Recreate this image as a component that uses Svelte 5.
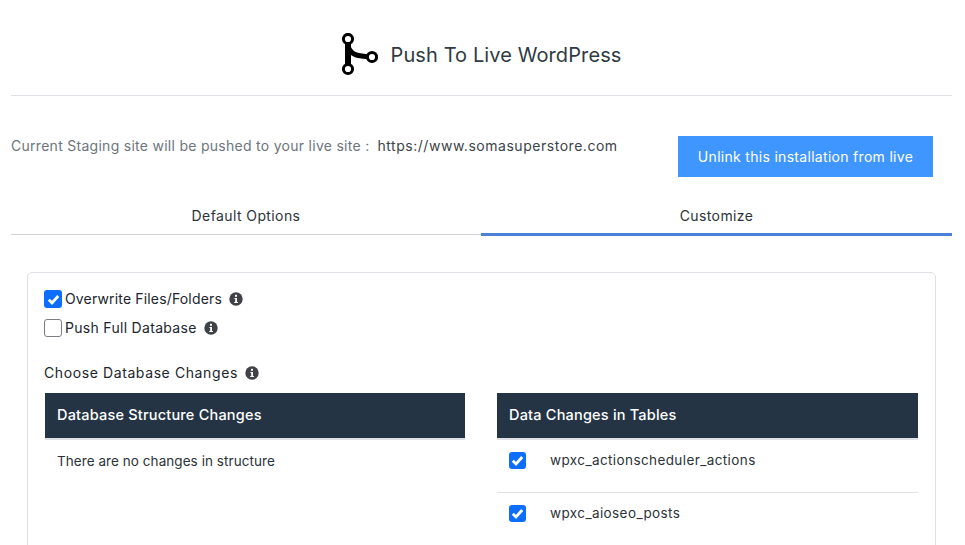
<script>
  const tables = ["wpxc_actionscheduler_actions", "wpxc_aioseo_posts"];
</script>

<main>
  <header class="head">
    <svg class="logo" width="38" height="44" viewBox="0 0 38 44" aria-hidden="true">
      <path d="M8 6V36" fill="none" stroke="#000" stroke-width="6" />
      <path d="M8 13C11 24 21 23 32 24" fill="none" stroke="#000" stroke-width="5" />
      <circle cx="8" cy="6" r="4.6" fill="#fff" stroke="#000" stroke-width="3" />
      <circle cx="32" cy="24" r="4.6" fill="#fff" stroke="#000" stroke-width="3" />
      <circle cx="8" cy="36" r="4.6" fill="#fff" stroke="#000" stroke-width="3" />
    </svg>
    <h1>Push To Live WordPress</h1>
  </header>

  <div class="site-row">
    <p class="site">
      <span class="muted">Current Staging site will be pushed to your live site :</span>
      <span class="url">https://www.somasuperstore.com</span>
    </p>
    <button class="unlink">Unlink this installation from live</button>
  </div>

  <nav class="tabs">
    <div class="tab">Default Options</div>
    <div class="tab active">Customize</div>
  </nav>

  <section class="panel">
    <label class="check">
      <span class="box on">{@render tick()}</span>
      <span class="label wide-a">Overwrite Files/Folders</span>
      {@render info()}
    </label>
    <label class="check second">
      <span class="box"></span>
      <span class="label wide-b">Push Full Database</span>
      {@render info()}
    </label>
    <div class="choose"><span class="label">Choose Database Changes</span> {@render info()}</div>

    <div class="columns">
      <div>
        <div class="col-head">Database Structure Changes</div>
        <div class="none">There are no changes in structure</div>
      </div>
      <div>
        <div class="col-head">Data Changes in Tables</div>
        {#each tables as name}
          <div class="table-row">
            <span class="box on small">{@render tick()}</span>
            <span>{name}</span>
          </div>
        {/each}
      </div>
    </div>
  </section>
</main>

{#snippet tick()}
  <svg width="17" height="17" viewBox="0 0 17 17" aria-hidden="true">
    <path d="M3.8 8.8L7 12L13.2 5" fill="none" stroke="#fff" stroke-width="2.8" />
  </svg>
{/snippet}

{#snippet info()}
  <svg class="info" width="14" height="14" viewBox="0 0 14 14" aria-hidden="true">
    <circle cx="7" cy="7" r="6.7" fill="#3f4347" />
    <rect x="6" y="2.8" width="2" height="2" fill="#fff" />
    <path d="M5.4 6H8V10H9V11H5.2V10H6.2V7H5.4Z" fill="#fff" />
  </svg>
{/snippet}

<style>
  :global(body) {
    background: #fff;
    overflow: hidden;
  }
  main {
    height: 545px;
    overflow: hidden;
    padding: 0 13px 0 11px;
    font-family: Inter, "Open Sans", sans-serif;
    font-size: 14px;
    color: #2c3338;
  }
  .head {
    height: 81px;
    padding: 14px 2px 0 0;
    border-bottom: 1px solid #dee2e6;
    display: flex;
    align-items: center;
    justify-content: center;
    gap: 13px;
  }
  h1 {
    margin: 0;
    font-size: 20px;
    font-weight: 400;
    letter-spacing: 0.1px;
    color: #2f3a44;
  }
  .site-row {
    height: 63px;
    display: flex;
    align-items: flex-start;
    justify-content: space-between;
    padding: 40px 19px 0 0;
  }
  .site {
    margin: 0;
    line-height: 20px;
    display: flex;
    gap: 8px;
  }
  .muted {
    color: #6c757d;
    letter-spacing: 0.28px;
  }
  .url {
    color: #3c434a;
    letter-spacing: 0.53px;
  }
  .unlink {
    width: 255px;
    height: 41px;
    border: 0;
    background: #4096ff;
    color: #fff;
    font: inherit;
    letter-spacing: 0.3px;
  }
  .tabs {
    height: 74px;
    display: grid;
    grid-template-columns: 470px 471px;
    align-items: start;
    margin-top: -1px;
  }
  .tab {
    height: 36px;
    line-height: 35px;
    text-align: center;
    border-bottom: 1px solid #cfd3d7;
    letter-spacing: 0.4px;
  }
  .active {
    height: 35px;
    border-bottom: 3px solid #4a80d8;
  }
  .panel {
    margin: 0 16px;
    height: 320px;
    box-sizing: border-box;
    border: 1px solid #dee2e6;
    border-radius: 5px;
    padding: 17px 16px 0;
  }
  .check {
    display: flex;
    align-items: center;
    gap: 3px;
    height: 18px;
    color: #20262c;
  }
  .label {
    padding-bottom: 2px;
  }
  .wide-a {
    letter-spacing: 0.16px;
  }
  .wide-b {
    letter-spacing: 0.3px;
  }
  .second {
    margin-top: 11px;
  }
  .box {
    width: 18px;
    height: 18px;
    box-sizing: border-box;
    border: 1px solid #7b7f84;
    border-radius: 3px;
    background: #fff;
    display: flex;
    align-items: center;
    justify-content: center;
  }
  .box.on {
    border: 0;
    background: #0d6efd;
  }
  .small {
    flex: none;
    width: 17px;
    height: 17px;
  }
  .info {
    margin-left: 4px;
  }
  .choose {
    display: flex;
    align-items: center;
    gap: 3px;
    margin-top: 27px;
    height: 18px;
    color: #20262c;
    letter-spacing: 0.6px;
  }
  .columns {
    display: grid;
    grid-template-columns: 420px 421px;
    gap: 32px;
    margin-top: 11px;
    padding-left: 1px;
  }
  .col-head {
    height: 45px;
    line-height: 43px;
    padding-left: 12px;
    background: #243444;
    color: #fff;
    font-size: 14.5px;
    font-weight: 500;
    letter-spacing: 0.2px;
    border-bottom: 2px solid #dee2e6;
  }
  .none {
    padding: 11px 12px;
    line-height: 20px;
    font-size: 13.5px;
    letter-spacing: 0.06px;
  }
  .table-row {
    height: 40px;
    padding: 12px 12px 0;
    border-bottom: 1px solid #dee2e6;
    display: flex;
    align-items: flex-start;
    gap: 24px;
    font-size: 13.5px;
    line-height: 17px;
    letter-spacing: 0.4px;
  }
</style>
